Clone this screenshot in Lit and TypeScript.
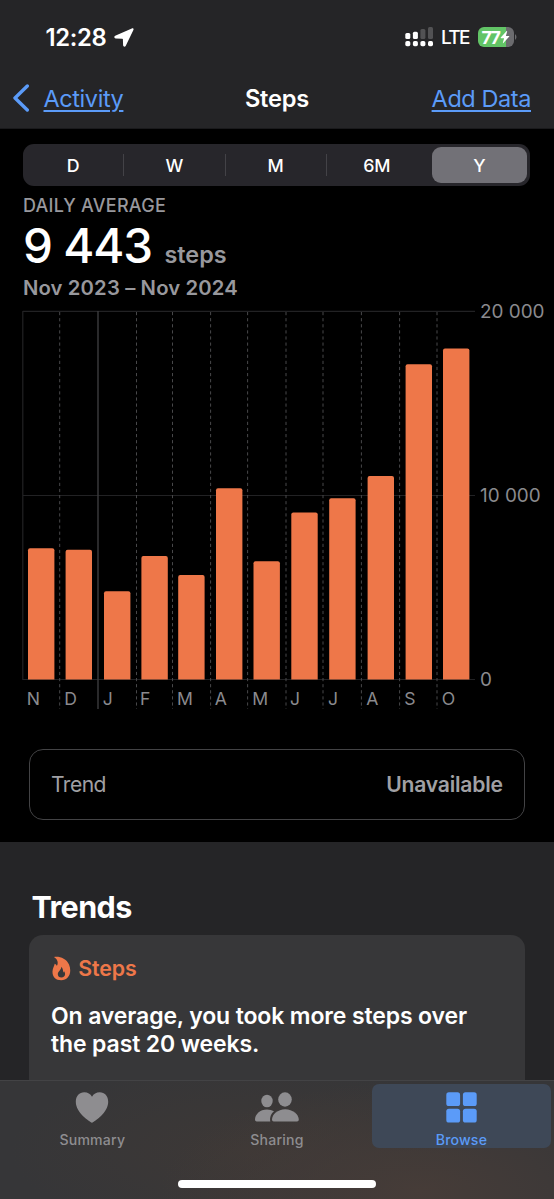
import { LitElement, html, css, svg } from "lit";
import { customElement } from "lit/decorators.js";
import { classMap } from "lit/directives/class-map.js";

const BASE = 679.5;

const bars = [
  { label: "N", x: 28, top: 548.3 },
  { label: "D", x: 65.6, top: 549.8 },
  { label: "J", x: 104, top: 591.3 },
  { label: "F", x: 141.4, top: 556 },
  { label: "M", x: 178.2, top: 575 },
  { label: "A", x: 216, top: 488.3 },
  { label: "M", x: 253.5, top: 561.2 },
  { label: "J", x: 291.3, top: 512.5 },
  { label: "J", x: 329.2, top: 498.2 },
  { label: "A", x: 367.6, top: 476 },
  { label: "S", x: 405.6, top: 364.2 },
  { label: "O", x: 443, top: 348.5 },
];

const monthLines = [59.7, 136.5, 172.5, 210.6, 247.6, 286, 323, 361.4, 399.6, 437];

@customElement("steps-chart")
export class StepsChart extends LitElement {
  static styles = css`
    :host { display: block; height: 420px; }
    svg { display: block; }
    .grid { stroke: #222224; stroke-width: 1.2; fill: none; }
    .year { stroke: #3c3c3e; stroke-width: 1.4; }
    .month { stroke: #48484a; stroke-width: 1; stroke-dasharray: 3.2 2.9; }
    .bar { fill: #ee7749; }
    text { font-family: Inter, sans-serif; font-size: 17.6px; fill: #8a8a8e; }
    .axis { font-size: 18.9px; }
  `;

  render() {
    return html`<svg width="554" height="420" viewBox="0 300 554 420">
      <path class="grid" d="M22.8 311.3H475M22.8 495.5H475M22.8 679.5H475M22.8 311V680" />
      <path class="year" d="M98 311V709" />
      ${monthLines.map((x) => svg`<path class="month" d="M${x} 312V709" />`)}
      ${bars.map(
        (b) => svg`
          <path class="bar" d="M${b.x} ${BASE}V${b.top + 2}q0 -2 2 -2h22.4q2 0 2 2V${BASE}z" />
          <text x=${b.x - 1.3} y="704.6">${b.label}</text>`
      )}
      <text class="axis" x="480" y="318">20 000</text>
      <text class="axis" x="480" y="502.3">10 000</text>
      <text class="axis" x="480" y="686.3">0</text>
    </svg>`;
  }
}

@customElement("app-root")
export class AppRoot extends LitElement {
  static styles = css`
    * { box-sizing: border-box; }
    :host {
      display: flex;
      flex-direction: column;
      width: 554px;
      height: 1199px;
      overflow: hidden;
      background: #000;
      color: #fff;
      font-family: Inter, sans-serif;
      white-space: nowrap;
    }
    svg { display: block; flex: none; }
    header { height: 129px; background: #252527; flex: none; border-bottom: 1px solid #1a1a1c; }
    .status { display: flex; height: 74px; align-items: center; padding: 0 37.5px 0 45.5px; }
    .time { font-size: 23.8px; font-weight: 600; letter-spacing: -0.3px; width: 68.5px; }
    .radio { margin-left: auto; }
    .lte { font-size: 19px; font-weight: 500; letter-spacing: -1.7px; margin: 0 0 0 7px; width: 36.5px; }
    .battery { display: flex; align-items: center; }
    .cell {
      display: flex; align-items: center; width: 36px; height: 20px; border-radius: 6px; padding-left: 4px;
      background: linear-gradient(90deg, #62c466 0 27.5px, #6b6b6e 27.5px);
      font-size: 17.8px; font-weight: 700; letter-spacing: -1.6px;
    }
    .bolt { margin-left: 1px; }
    .nav { display: grid; grid-template-columns: 1fr auto 1fr; height: 48.6px; align-items: center; padding: 0 23px; font-size: 23.5px; }
    .back { display: flex; align-items: center; gap: 13.5px; margin-left: -11px; }
    .link { color: #5b9bf8; text-decoration: underline; text-decoration-thickness: 1.5px; text-underline-offset: 3px; letter-spacing: -0.42px; }
    .add { text-align: right; }
    .title { font-weight: 600; font-size: 23.6px; letter-spacing: -0.2px; }
    .segments { display: flex; flex: none; align-items: center; height: 42px; margin: 15px 24px 0 23px; padding: 0 3px 0 0; border-radius: 11px; background: #27262b; }
    .segment { flex: 1; height: 22px; text-align: center; font-size: 17.8px; font-weight: 500; line-height: 24px; border-right: 1.5px solid #434247; }
    .segment.plain { border-color: transparent; }
    .segment.on { flex: none; width: 95px; height: 36px; line-height: 38px; margin-left: 4px; border: 0; border-radius: 9px; background: #727177; }
    .summary { flex: none; height: 114px; padding-left: 23px; color: #98989d; font-weight: 600; }
    .caption { font-size: 18px; font-weight: 500; line-height: 24px; margin-top: 8px; letter-spacing: 0.25px; }
    .reading { display: flex; align-items: baseline; height: 56px; line-height: 56px; gap: 12.5px; }
    .value { color: #fff; font-size: 47.5px; font-weight: 500; letter-spacing: -1.15px; }
    .unit { font-size: 23.4px; }
    .range { font-size: 20.3px; line-height: 27px; letter-spacing: 0.12px; }
    .trend { display: flex; flex: none; justify-content: space-between; align-items: center; height: 71px; margin: 29px 28.8px 0 28.5px; padding: 0 21.5px; border: 1.4px solid #434345; border-radius: 14px; font-size: 21.1px; letter-spacing: -0.55px; color: #a0a0a4; }
    .none { font-weight: 600; letter-spacing: -0.22px; }
    .trends { flex: 1; margin-top: 22px; padding: 0 28.8px 0 28.5px; background: #252527; overflow: hidden; }
    h2 { margin: 45px 0 0 3px; font-size: 30.5px; line-height: 40px; font-weight: 700; letter-spacing: -0.6px; }
    .card { margin-top: 8px; height: 160px; border-radius: 14px; background: #373739; padding: 19px 22.5px; }
    .kind { display: flex; align-items: center; gap: 7px; height: 28px; padding-left: 1.3px; color: #ee7749; font-size: 21.3px; font-weight: 600; letter-spacing: -0.1px; }
    .text { margin: 20px 0 0; font-size: 23px; line-height: 28.4px; font-weight: 600; letter-spacing: -0.13px; }
    footer { flex: none; height: 119px; border-top: 1px solid #434345; background:
      radial-gradient(260px 110px at 420px 110px, #463c38, transparent),
      radial-gradient(240px 90px at 250px 70px, #3d3836, transparent), #363638; }
    .tabs { display: grid; grid-template-columns: repeat(3, 1fr); height: 99px; padding-top: 3px; }
    .tab { display: flex; flex-direction: column; align-items: center; height: 64px; padding-top: 6px; color: #8e8d90; font-size: 14.1px; font-weight: 500; letter-spacing: 0.2px; }
    .tab span { line-height: 20px; margin-top: 6.5px; }
    .tab.on { margin: 0 3px 0 2.5px; border-radius: 7px; background: #3e4857; color: #5b9bf8; }
    .home { width: 198px; height: 8px; margin: 0 auto; border-radius: 4px; background: #fff; }
  `;

  render() {
    const segments = ["D", "W", "M", "6M", "Y"];
    return html`
      <header>
        <div class="status">
          <span class="time">12:28</span>
          <svg width="20" height="19" viewBox="0 0 20 19" fill="#fff">
            <path d="M17.800.4 1.200 7.800c-1.400.7-1 2.600.5 2.700l6.600.2q.6 0 .6.6l.2 6c.1 1.600 2 2 2.700.5L19.400 2C20 .8 19 -.1 17.800.4z" />
          </svg>
          <svg class="radio" width="29" height="20" viewBox="405 27 29 20">
            <g fill="#fff">
              <rect x="405.3" y="41" width="5" height="5.300" rx="1.700" />
              <rect x="412.900" y="41" width="5" height="5.300" rx="1.700" />
              <rect x="420.400" y="41" width="5" height="5.300" rx="1.700" />
              <rect x="428" y="41" width="5" height="5.300" rx="1.700" />
              <rect x="405.300" y="33" width="5" height="6" rx="1.500" />
              <rect x="412.900" y="31.700" width="5" height="7.300" rx="1.500" />
            </g>
            <g fill="#525254">
              <rect x="420.400" y="29" width="5" height="10" rx="1.500" />
              <rect x="428" y="27" width="5" height="12" rx="1.500" />
            </g>
          </svg>
          <span class="lte">LTE</span>
          <div class="battery">
            <div class="cell">77
              <svg class="bolt" width="10" height="14" viewBox="0 0 11 14" fill="#fff"><path d="M7.300.3.8 7.600q-.4.700.4.700h3.300L3.100 13.500q0 .7.600.2L10.200 6.500q.4-.7-.4-.7H6.500L7.900.6Q7.900 0 7.300.3z" /></svg>
            </div>
            <svg width="3" height="8" viewBox="0 0 3 8" fill="#6b6b6e"><path d="M1 1q3 3 0 6z" /></svg>
          </div>
        </div>
        <div class="nav">
          <div class="back">
            <svg width="18" height="28" viewBox="0 0 18 28"><path d="M15.300 2 3 14l12.300 12" fill="none" stroke="#5b9bf8" stroke-width="3.400" stroke-linecap="round" stroke-linejoin="round" /></svg>
            <span class="link">Activity</span>
          </div>
          <span class="title">Steps</span>
          <span class="link add">Add Data</span>
        </div>
      </header>

      <div class="segments">
        ${segments.map(
          (s, i) => html`<div class=${classMap({ segment: true, on: i === 4, plain: i === 3 })}>${s}</div>`
        )}
      </div>
      <div class="summary">
        <div class="caption">DAILY AVERAGE</div>
        <div class="reading"><span class="value">9 443</span><span class="unit">steps</span></div>
        <div class="range">Nov 2023 – Nov 2024</div>
      </div>
      <steps-chart></steps-chart>
      <div class="trend"><span>Trend</span><span class="none">Unavailable</span></div>

      <section class="trends">
        <h2>Trends</h2>
        <div class="card">
          <div class="kind">
            <svg width="19" height="25" viewBox="0 0 19 25">
              <path fill="#ee7749" fill-rule="evenodd" d="M2.700.8C8 .2 14.500 2.500 17 8.500c3.500 8.500-.8 15.700-7.800 15.700C3.500 24.200.3 20.500.5 15.500.6 12 2.300 10.500 2.700 7.800c1.300.4 1.900 1.300 2.100 2.300C6.700 6.800 5.500 3.200 2.500 1.500q-.5-.5.200-.7zM9.300 10.800c.2 3.200-3.500 4.500-3.500 7.500 0 2 1.500 3.300 3.600 3.300s3.700-1.400 3.700-3.500c0-1.300-.5-2.300-1.200-3.200 0 .7-.3 1.200-.8 1.500.1-2.300-.5-4.500-1.800-5.600z" />
            </svg>
            <span>Steps</span>
          </div>
          <p class="text">On average, you took more steps over<br />the past 20 weeks.</p>
        </div>
      </section>

      <footer>
        <div class="tabs">
          <div class="tab">
            <svg width="34" height="33" viewBox="0 0 34 33" fill="currentColor"><path d="M17 32.800C14.500 31.500.8 22.800.8 11.800.8 5.800 4.500 2.200 9.200 2.200c3.500 0 6.300 1.500 7.800 4.500 1.500-3 4.300-4.500 7.800-4.500 4.700 0 8.400 3.600 8.400 9.600C33.200 22.800 19.500 31.500 17 32.800z" /></svg>
            <span>Summary</span>
          </div>
          <div class="tab">
            <svg width="46" height="33" viewBox="0 0 46 33" fill="currentColor">
              <ellipse cx="13" cy="11" rx="5.700" ry="6.300" />
              <ellipse cx="31" cy="9.500" rx="6.800" ry="7.200" />
              <path d="M1 29.800C1 24.500 6 19.600 13 19.600q4 0 7 1.600C17 23.500 15.500 27.500 16.300 31.500H2.700q-1.700 0-1.700-1.700z" />
              <path d="M18 29.800C18 24.500 23.700 19.300 31.200 19.300S44.800 24.500 44.800 29.800Q44.800 31.500 43.100 31.500H19.700q-1.700 0-1.700-1.700z" />
            </svg>
            <span>Sharing</span>
          </div>
          <div class="tab on">
            <svg width="31" height="33" viewBox="0 0 31 33" fill="currentColor">
              <rect x=".3" y="2.300" width="13.800" height="13.800" rx="2.600" /><rect x="16.900" y="2.300" width="13.800" height="13.800" rx="2.600" />
              <rect x=".3" y="18.700" width="13.800" height="13.800" rx="2.600" /><rect x="16.900" y="18.700" width="13.800" height="13.800" rx="2.600" />
            </svg>
            <span>Browse</span>
          </div>
        </div>
        <div class="home"></div>
      </footer>
    `;
  }
}
